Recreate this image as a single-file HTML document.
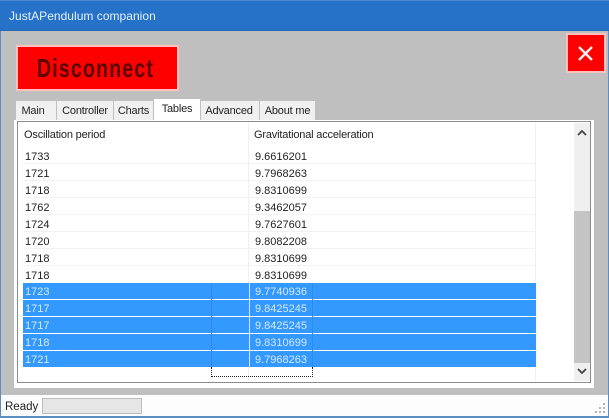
<!DOCTYPE html>
<html><head><meta charset="utf-8"><style>
html,body{margin:0;padding:0;width:609px;height:418px;overflow:hidden;background:#bfbfbf}
div{position:absolute;box-sizing:border-box}
body{font-family:"Liberation Sans",sans-serif;font-size:11px;color:#222}
.t{white-space:nowrap;line-height:14px}
.h{letter-spacing:-.18px}
.tab{background:#f0f0f0;top:101px;height:20px;line-height:21px;text-align:center;white-space:nowrap;letter-spacing:-.2px}
.sep{left:23px;width:513px;height:1px;background:#f2f2f2}
.sel{left:23px;width:513px;height:16px;background:#3399ff}
.w{color:#d5e9ff}
</style></head><body>
<div style="left:0;top:0;width:609px;height:418px;background:#bfbfbf;border:1px solid #5b8fc4"></div>
<div style="left:0;top:0;width:609px;height:31px;background:#2672c9;border-top:1px solid #4a8ad4;border-bottom:1px solid #2a66ad"></div>
<div class="t" style="left:9px;top:9px;color:#e6f0fb;font-size:12px;letter-spacing:.03px">JustAPendulum companion</div>

<div style="left:16px;top:45px;width:163px;height:46px;background:#f00;border:2px solid #ffc0c0"></div>
<div class="t" style="left:37px;top:53px;color:#5a0000;font:bold 26px/30px 'Liberation Sans',sans-serif;letter-spacing:1.6px;transform-origin:0 0;transform:scaleX(.75)">Disconnect</div>

<div style="left:566px;top:33px;width:40px;height:40px;background:#f00;border:2px solid #ffc0c0"></div>
<svg style="position:absolute;left:566px;top:33px" width="40" height="40"><path d="M13 14L26 27M26 14L13 27" stroke="#fbeeee" stroke-width="2.4" fill="none"/></svg>

<div class="tab" style="left:16px;width:40px;padding-right:6px">Main</div>
<div class="tab" style="left:57px;width:56px">Controller</div>
<div class="tab" style="left:114px;width:39px">Charts</div>
<div class="tab" style="left:201px;width:58px;padding-right:2px">Advanced</div>
<div class="tab" style="left:260px;width:55px">About me</div>
<div class="tab" style="left:154px;width:46px;top:99px;height:22px;background:#fff;line-height:20px">Tables</div>

<div style="left:14px;top:120px;width:580px;height:268px;background:#fff"></div>
<div style="left:17px;top:121px;width:574px;height:262px;background:#fff;border:1px solid #8c8c8c"></div>

<div style="left:574px;top:123px;width:16px;height:258px;background:#efefef"></div>
<div style="left:574px;top:211px;width:16px;height:152px;background:#c4c4c4"></div>
<svg style="position:absolute;left:574px;top:123px" width="16" height="258"><path d="M4 12L8 8L12 12M4 246L8 250L12 246" stroke="#444" stroke-width="1.8" fill="none"/></svg>

<div style="left:248px;top:123px;width:1px;height:258px;background:#f0f0f0"></div>
<div style="left:535px;top:123px;width:1px;height:258px;background:#f0f0f0"></div>
<div class="sep" style="top:163px"></div><div class="sep" style="top:180px"></div><div class="sep" style="top:197px"></div><div class="sep" style="top:214px"></div><div class="sep" style="top:231px"></div><div class="sep" style="top:248px"></div><div class="sep" style="top:265px"></div>

<div class="t h" style="left:24px;top:128px">Oscillation period</div>
<div class="t h" style="left:254px;top:128px">Gravitational acceleration</div>

<div class="t" style="left:25px;top:150px">1733</div><div class="t" style="left:255px;top:150px">9.6616201</div>
<div class="t" style="left:25px;top:167px">1721</div><div class="t" style="left:255px;top:167px">9.7968263</div>
<div class="t" style="left:25px;top:184px">1718</div><div class="t" style="left:255px;top:184px">9.8310699</div>
<div class="t" style="left:25px;top:201px">1762</div><div class="t" style="left:255px;top:201px">9.3462057</div>
<div class="t" style="left:25px;top:218px">1724</div><div class="t" style="left:255px;top:218px">9.7627601</div>
<div class="t" style="left:25px;top:235px">1720</div><div class="t" style="left:255px;top:235px">9.8082208</div>
<div class="t" style="left:25px;top:252px">1718</div><div class="t" style="left:255px;top:252px">9.8310699</div>
<div class="t" style="left:25px;top:269px">1718</div><div class="t" style="left:255px;top:269px">9.8310699</div>

<div class="sel" style="top:283px"></div><div class="sel" style="top:300px"></div><div class="sel" style="top:317px"></div><div class="sel" style="top:334px"></div><div class="sel" style="top:351px"></div>
<div style="left:249px;top:283px;width:1px;height:84px;background:#d5e9ff"></div>

<div class="t w" style="left:25px;top:285px">1723</div><div class="t w" style="left:255px;top:285px">9.7740936</div>
<div class="t w" style="left:25px;top:302px">1717</div><div class="t w" style="left:255px;top:302px">9.8425245</div>
<div class="t w" style="left:25px;top:319px">1717</div><div class="t w" style="left:255px;top:319px">9.8425245</div>
<div class="t w" style="left:25px;top:336px">1718</div><div class="t w" style="left:255px;top:336px">9.8310699</div>
<div class="t w" style="left:25px;top:353px">1721</div><div class="t w" style="left:255px;top:353px">9.7968263</div>

<div style="left:211px;top:283px;width:1px;height:84px;background:#2f8be8"></div>
<div style="left:312px;top:283px;width:1px;height:84px;background:#2f8be8"></div>
<div style="left:211px;top:367px;width:102px;height:10px;border:1px dotted #222;border-top:none"></div>

<div style="left:1px;top:395px;width:607px;height:22px;background:#fdfdfd"></div>
<div style="left:0;top:416px;width:609px;height:2px;background:#5b8fc4"></div>
<div class="t" style="left:5px;top:400px;font-size:11.5px">Ready</div>
<div style="left:42px;top:398px;width:100px;height:16px;background:#e6e6e6;border:1px solid #bcbcbc"></div>
<svg style="position:absolute;left:594px;top:402px" width="13" height="13"><g fill="#b5b5b5"><rect x="9" y="1" width="2" height="2"/><rect x="5" y="5" width="2" height="2"/><rect x="9" y="5" width="2" height="2"/><rect x="1" y="9" width="2" height="2"/><rect x="5" y="9" width="2" height="2"/><rect x="9" y="9" width="2" height="2"/></g></svg>
</body></html>
